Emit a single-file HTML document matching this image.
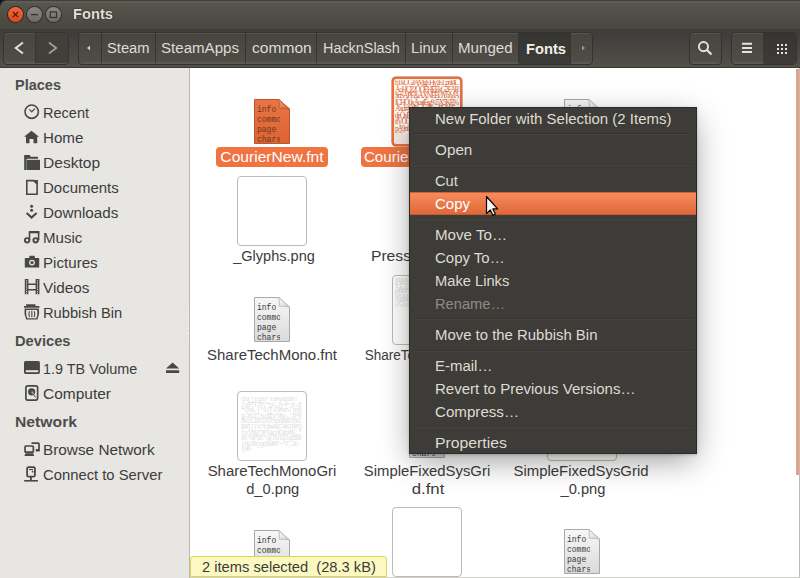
<!DOCTYPE html>
<html><head><meta charset="utf-8">
<style>
*{margin:0;padding:0;box-sizing:border-box}
html,body{width:800px;height:578px;overflow:hidden;background:#fff}
body{position:relative;font-family:"Liberation Sans",sans-serif;font-size:14.7px}
.a{position:absolute}
.t{position:absolute;white-space:pre;line-height:17px}
#title{left:0;top:0;width:800px;height:29px;background:linear-gradient(#403f3a 0,#403f3a 1px,#5e5c54 1px,#5e5c54 3px,#57554e 3px,#47463f 29px)}
#tool{left:0;top:29px;width:800px;height:39px;background:linear-gradient(#3d3c38 0,#4c4a45 28px,#54514b 38px)}
.wb{position:absolute;top:7px;width:15px;height:15px;border-radius:50%}
#side{left:0;top:68px;width:190px;height:510px;background:#e8e6e3;border-right:1px solid #b9b7b1}
#content{left:190px;top:68px;width:610px;height:510px;background:#fff}
.sh{font-weight:bold;color:#4d4d4d}
.si{color:#3c3c3c}
.ic{position:absolute}
.lbl{color:#3c3c3c}

.fnt{position:absolute;width:36px;height:45px}
.fnt .pg{position:absolute;left:0;top:0;width:36px;height:45px;border:1px solid #a3a3a3;background:linear-gradient(#f5f5f5,#dedede);clip-path:polygon(0 0,24px 0,36px 11px,36px 45px,0 45px)}
.fnt .fold{position:absolute;left:24px;top:0;width:12px;height:11px;background:linear-gradient(225deg,transparent 50%,#d8d8d8 50%,#f4f4f4);}
.fnt .ft{position:absolute;left:3px;top:6px;width:26px;height:39px;overflow:hidden;font-family:"Liberation Mono",monospace;font-size:9px;line-height:10px;transform:scaleX(0.89);transform-origin:left;color:#3a3a3a;white-space:pre}
.fnt .fe{position:absolute;left:0;top:0}
.th{position:absolute;width:70px;height:70px;border:1px solid #bebbb5;border-radius:4px;background:#fff;overflow:hidden}
.lb{position:absolute;white-space:pre;line-height:17px;color:#3c3c3c;text-align:center;width:150px}

#menu{position:absolute;left:409px;top:107px;width:288px;height:347px;background:#3d3c38;border:1px solid #2b2a27;box-shadow:0 9px 30px -3px rgba(0,0,0,.4),0 1px 3px rgba(0,0,0,.2)}
.mi{position:absolute;left:25px;transform-origin:left;white-space:pre;line-height:17px;color:#dfdbd2}
.ms{position:absolute;left:4px;width:278px;height:2px;border-top:1px solid #363531;border-bottom:1px solid #45443f}
</style></head><body>
<div id="title" class="a"></div>
<div class="a" style="left:0;top:0;width:6px;height:6px;background:radial-gradient(circle at 6px 6px,transparent 4.5px,#46453f 5px,#0c1620 6.5px)"></div>
<div class="wb" style="left:8px;background:linear-gradient(#f0683a,#dc4a1c);box-shadow:0 0 0 1px #2e2520"></div>
<div class="wb" style="left:27px;background:linear-gradient(#8b8983,#6c6a64);box-shadow:0 0 0 1px #2f2e2a"></div>
<div class="wb" style="left:46px;background:linear-gradient(#8b8983,#6c6a64);box-shadow:0 0 0 1px #2f2e2a"></div>
<svg class="a" style="left:0;top:0" width="70" height="29">
<path d="M12.8 11.8L18.2 17.2M18.2 11.8L12.8 17.2" stroke="#3a1a10" stroke-width="1.2"/>
<path d="M31 14.6H38" stroke="#34332f" stroke-width="1.3"/>
<rect x="50.3" y="11.9" width="6.2" height="5.6" fill="none" stroke="#34332f" stroke-width="1.2"/>
</svg>
<div class="t" style="left:73px;top:6px;font-weight:bold;color:#e4e0d7;text-shadow:0 0 1px #1d1c1a,0 0 1px #1d1c1a">Fonts</div>

<div id="tool" class="a"></div>
<div class="a" style="left:0;top:67px;width:800px;height:1px;background:#3a3935"></div>
<!-- nav -->
<div class="a" style="left:3px;top:32px;width:66px;height:33px;border:1px solid #34332f;border-radius:4px;background:linear-gradient(#55534c 0,#55534c 1px,#47453f 1px,#4f4d47 29px,#5a5851 29px,#5a5851 31px)"></div>
<div class="a" style="left:35px;top:33px;width:1px;height:30px;background:#35342f"></div>
<div class="a" style="left:36px;top:33px;width:32px;height:30px;background:#403f3a;border-radius:0 3px 3px 0"></div>
<svg class="a" style="left:0;top:29px" width="70" height="39"><path d="M23 13.5L15.8 19L23 24.5" stroke="#e4e0d7" stroke-width="2" fill="none"/><path d="M49 13.5L56.2 19L49 24.5" stroke="#a29e96" stroke-width="1.8" fill="none"/></svg>
<!-- path bar -->
<div class="a" style="left:78px;top:32px;width:515px;height:33px;border:1px solid #34332f;border-radius:4px;background:linear-gradient(#55534c 0,#55534c 1px,#47453f 1px,#4f4d47 29px,#5a5851 29px,#5a5851 31px)"></div>
<div class="a" style="left:519px;top:33px;width:51px;height:31px;background:linear-gradient(#363531,#3c3b37)"></div>
<div class="a" style="left:101px;top:33px;width:1px;height:30px;background:#35342f"></div>
<div class="a" style="left:155px;top:33px;width:1px;height:30px;background:#35342f"></div>
<div class="a" style="left:245px;top:33px;width:1px;height:30px;background:#35342f"></div>
<div class="a" style="left:316px;top:33px;width:1px;height:30px;background:#35342f"></div>
<div class="a" style="left:405px;top:33px;width:1px;height:30px;background:#35342f"></div>
<div class="a" style="left:452px;top:33px;width:1px;height:30px;background:#35342f"></div>
<div class="a" style="left:518px;top:33px;width:1px;height:30px;background:#35342f"></div>
<div class="a" style="left:570px;top:33px;width:1px;height:31px;background:#35342f"></div>
<svg class="a" style="left:85px;top:44px" width="8" height="8"><path d="M5 1.5L2 4L5 6.5Z" fill="#cfcbc2"/></svg>
<svg class="a" style="left:579px;top:44px" width="8" height="8"><path d="M3 1.5L6 4L3 6.5Z" fill="#9a968e"/></svg>
<div class="t" style="left:107px;top:40px;color:#dfdbd2">Steam</div>
<div class="t" style="left:161px;top:40px;color:#dfdbd2;transform:scaleX(1.027);transform-origin:left">SteamApps</div>
<div class="t" style="left:252px;top:40px;color:#dfdbd2;transform:scaleX(1.06);transform-origin:left">common</div>
<div class="t" style="left:323px;top:40px;color:#dfdbd2;transform:scaleX(0.98);transform-origin:left">HacknSlash</div>
<div class="t" style="left:410.5px;top:40px;color:#dfdbd2;transform:scaleX(1.01);transform-origin:left">Linux</div>
<div class="t" style="left:458px;top:40px;color:#dfdbd2;transform:scaleX(1.03);transform-origin:left">Munged</div>
<div class="t" style="left:526px;top:40.5px;color:#f2efe8;font-weight:bold;transform:scaleX(1.0);transform-origin:left">Fonts</div>
<!-- search -->
<div class="a" style="left:689px;top:32px;width:33px;height:33px;border:1px solid #34332f;border-radius:4px;background:linear-gradient(#55534c 0,#55534c 1px,#47453f 1px,#4f4d47 29px,#5a5851 29px,#5a5851 31px)"></div>
<svg class="a" style="left:689px;top:32px" width="33" height="32"><circle cx="14.5" cy="14.6" r="4.6" stroke="#e6e2d9" stroke-width="1.9" fill="none"/><path d="M18 18L22.5 22.5" stroke="#e6e2d9" stroke-width="2.2"/></svg>
<!-- view -->
<div class="a" style="left:731px;top:32px;width:66px;height:33px;border:1px solid #34332f;border-radius:4px;background:linear-gradient(#55534c 0,#55534c 1px,#47453f 1px,#4f4d47 29px,#5a5851 29px,#5a5851 31px)"></div>
<div class="a" style="left:763px;top:33px;width:33px;height:31px;background:linear-gradient(#363531,#3c3b37);border-radius:0 3px 3px 0"></div>
<svg class="a" style="left:731px;top:32px" width="66" height="32">
<path d="M11 11.8H21M11 15.9H21M11 20H21" stroke="#e6e2d9" stroke-width="2"/>
<g fill="#e6e2d9"><rect x="46" y="12" width="2" height="2"/><rect x="50" y="12" width="2" height="2"/><rect x="54" y="12" width="2" height="2"/><rect x="46" y="16" width="2" height="2"/><rect x="50" y="16" width="2" height="2"/><rect x="54" y="16" width="2" height="2"/><rect x="46" y="20" width="2" height="2"/><rect x="50" y="20" width="2" height="2"/><rect x="54" y="20" width="2" height="2"/></g>
</svg>

<!-- sidebar -->
<div id="side" class="a"></div>
<div class="t sh" style="left:15px;top:77px;transform:scaleX(0.987);transform-origin:left">Places</div>
<div class="t si" style="left:43px;top:105px;transform:scaleX(0.99);transform-origin:left">Recent</div>
<div class="t si" style="left:43px;top:130px;transform:scaleX(1.03);transform-origin:left">Home</div>
<div class="t si" style="left:43px;top:155px;transform:scaleX(1.06);transform-origin:left">Desktop</div>
<div class="t si" style="left:43px;top:180px;transform:scaleX(1.02);transform-origin:left">Documents</div>
<div class="t si" style="left:43px;top:205px;transform:scaleX(1.037);transform-origin:left">Downloads</div>
<div class="t si" style="left:43px;top:230px;transform:scaleX(1.027);transform-origin:left">Music</div>
<div class="t si" style="left:43px;top:255px;transform:scaleX(1.03);transform-origin:left">Pictures</div>
<div class="t si" style="left:43px;top:280px;transform:scaleX(1.04);transform-origin:left">Videos</div>
<div class="t si" style="left:43px;top:305px;transform:scaleX(1.0);transform-origin:left">Rubbish Bin</div>
<div class="t sh" style="left:15px;top:333px">Devices</div>
<div class="t si" style="left:43px;top:361px;transform:scaleX(0.98);transform-origin:left">1.9 TB Volume</div>
<div class="t si" style="left:43px;top:386px;transform:scaleX(1.055);transform-origin:left">Computer</div>
<div class="t sh" style="left:15px;top:414px;transform:scaleX(1.07);transform-origin:left">Network</div>
<div class="t si" style="left:43px;top:442px;transform:scaleX(1.044);transform-origin:left">Browse Network</div>
<div class="t si" style="left:43px;top:467px;transform:scaleX(1.008);transform-origin:left">Connect to Server</div>


<svg class="a" style="left:0;top:0" width="190" height="578">
<g fill="none" stroke="#474747" stroke-width="1.6">
<circle cx="31.7" cy="111.7" r="6.7"/>
<path d="M29.4 109.4L31.7 111.8L35 108.6" stroke-width="1.2"/>
<path d="M26.8 180.6H33.8L37.1 183.9V194.3H26.8Z"/>
<path d="M26.6 212.9L31.6 217.6L36.6 212.9" stroke-width="2"/>
<circle cx="27.1" cy="240.3" r="2.2" stroke-width="1.9"/>
<circle cx="35.6" cy="240.3" r="2.2" stroke-width="1.9"/>
<path d="M29.5 240.3V232H38.6V240.3" stroke-width="1.6"/>
<rect x="25.9" y="385.8" width="11.7" height="14.3" rx="1.8" stroke-width="1.7"/>
<rect x="25.05" y="446" width="8.3" height="6.2" rx="0.8" stroke-width="1.7"/>
<path d="M31.5 443.1H38.2Q39 443.1 39 443.9V450.2H36.7" stroke-width="1.7"/>
<rect x="27.1" y="467.1" width="7.8" height="9.6" rx="1.5" stroke-width="1.8"/>
<path d="M30.9 477V480.3" stroke-width="1.8"/>
<path d="M24.2 480.8H37.9" stroke-width="1.6"/>
<path d="M29 469.5H33" stroke-width="1.1"/>
</g>
<g fill="#474747">
<path d="M33.6 179.9H37.9V184.6Z"/>
<path d="M31.5 130.8L24 136.7H26V143.2H29.5V139H33.5V143.2H37.2V136.7H39Z"/>
<path d="M24.2 155H29.8L30.6 156.8H38V158.8H26.6V170H24.2Z"/>
<path d="M26.8 159.8H40V170H26.8Z"/>
<circle cx="31.6" cy="206.3" r="1.5"/><circle cx="31.6" cy="210.3" r="1.5"/>
<path d="M29.3 231H39.3V233.3H29.3Z"/>
<path d="M24.8 258.1H29.1L29.6 255.8H34.5L35 258.1H39.2V267.6H24.8Z"/>
<path d="M24.8 279H28.4V294.3H24.8ZM35.6 279H39.4V294.3H35.6ZM28.4 283.6H35.6V285.1H28.4ZM28.4 289H35.6V290.5H28.4Z"/>
<path d="M26.1 304.2H35.5V306.2H26.1ZM24 306H39.4V307.8H24Z"/>
<path d="M24.6 308.6H39Q40 314 37.4 319.6H26.2Q23.6 314 24.6 308.6Z"/>
<path d="M25.6 361H38.3Q39.9 361 39.9 362.6V372.3Q39.9 373.9 38.3 373.9H25.6Q24 373.9 24 372.3V362.6Q24 361 25.6 361Z"/>
<path d="M166 370.2H179.2V373H166ZM172.6 362.5L179.2 368.6H166Z"/>
<circle cx="31.6" cy="391.8" r="3.6"/>
<path d="M24.4 456H34.2L33.2 453.3H25.4Z"/>
<path d="M35.8 449H38.8L39.6 451.5H35.8Z"/>
</g>
<g fill="#e8e6e3">
<circle cx="32" cy="262.6" r="2.9"/>
<rect x="25.8" y="370.2" width="12.4" height="2"/>
<path d="M26.3 309.9H37.2Q38 314 36.4 318.2H27.2Q25.6 314 26.3 309.9Z"/>
<circle cx="26.6" cy="280.8" r=".6"/><circle cx="26.6" cy="282.9" r=".6"/><circle cx="26.6" cy="285" r=".6"/><circle cx="26.6" cy="287.1" r=".6"/><circle cx="26.6" cy="289.2" r=".6"/><circle cx="26.6" cy="291.3" r=".6"/><circle cx="26.6" cy="293.2" r=".6"/>
<circle cx="37.5" cy="280.8" r=".6"/><circle cx="37.5" cy="282.9" r=".6"/><circle cx="37.5" cy="285" r=".6"/><circle cx="37.5" cy="287.1" r=".6"/><circle cx="37.5" cy="289.2" r=".6"/><circle cx="37.5" cy="291.3" r=".6"/><circle cx="37.5" cy="293.2" r=".6"/>
</g>
<circle cx="27.1" cy="240.3" r="1" fill="#e8e6e3"/>
<circle cx="32" cy="262.6" r="1.6" fill="#474747"/>
<path d="M29.5 311.2Q28.3 314 29.5 317M34.2 311.2Q35.4 314 34.2 317M31.85 310.8V317.2" stroke="#474747" stroke-width="1.1" fill="none"/>
<path d="M31.8 391.6L35.4 397.2" stroke="#e8e6e3" stroke-width="1.3"/>
<path d="M32.3 392.6L35.5 397.4" stroke="#474747" stroke-width="1"/>
<circle cx="32.6" cy="471.7" r=".9" fill="#474747"/>
</svg>

<div class="a" style="left:188px;top:308px;width:1px;height:1px;background:#fff"></div><div class="a" style="left:188px;top:313px;width:1px;height:1px;background:#fff"></div><div class="a" style="left:188px;top:318px;width:1px;height:1px;background:#fff"></div><div class="a" style="left:188px;top:323px;width:1px;height:1px;background:#fff"></div><div class="a" style="left:188px;top:328px;width:1px;height:1px;background:#fff"></div><div class="a" style="left:188px;top:333px;width:1px;height:1px;background:#fff"></div><div class="a" style="left:188px;top:338px;width:1px;height:1px;background:#fff"></div>
<!-- content -->
<div id="content" class="a"></div>
<div class="fnt" style="left:254px;top:99px"><svg class="fe" width="36" height="46"><defs><linearGradient id="fg1" x1="0" y1="0" x2="0" y2="1"><stop offset="0" stop-color="#ea7444"/><stop offset="1" stop-color="#dc6431"/></linearGradient><linearGradient id="fg1f" x1="0" y1="0" x2="1" y2="1"><stop offset="0" stop-color="#f4a27c"/><stop offset="1" stop-color="#d2663a"/></linearGradient></defs><path d="M0.5 0.5H24.8L35.5 10V44.5H0.5Z" fill="url(#fg1)" stroke="#b8562c"/><path d="M24.8 0.5Q25.6 5 25.3 9.3Q30 8.8 35.5 10Z" fill="url(#fg1f)" stroke="#b8562c" stroke-width="0.8" stroke-linejoin="round"/></svg><div class="ft" style="color:#6a3722">info
commo
page
chars</div></div>
<div class="a" style="left:216px;top:147px;width:112px;height:20px;border-radius:4px;background:#ef7442"></div>
<div class="lb" style="left:197px;top:149px;color:#fff;transform:scaleX(1.063);transform-origin:center">CourierNew.fnt</div>
<div class="a" style="left:392px;top:77px;width:70px;height:69px;border:2px solid #e9713f;border-radius:4px;background:#fbeee8;overflow:hidden;box-shadow:0 0 0 0.5px #b65a32"><div style="position:absolute;left:1px;top:1px;width:64px;height:53px;background:#fff;font-family:'Liberation Serif',serif;font-size:7.5px;line-height:6.5px;letter-spacing:-1.2px;color:#e0622e;word-break:break-all;overflow:hidden">bTkÚGJÂMgÉHy1ELpnI4LÄoHÇP2ÖÖÉHÈÉkG2FÅR$nSÃPÈ&ÅXNÉÈØYhMÄIÇHÕ0xÂoatÉsg%5X5KÈ%Áxdr#ÓJPznVdTwnFÜJÅÈadeÒxÉsIL8uÜIH&ÙÈr#jÜeCtfVÔOxH1#Q5kkxKVrlÄ9RpÄ9nfi3TKWT3Û3BwÑX7#ASnÂhÔÇaQzÕÚGsÅkklkNvØlHYI0qUOdÒGNAÇTÂMgÔDJ0ÔiTØ6eÓguPOwtvv&KSNd7vUÀC0ÁgSÃDÁ%ÙL7ÀgVf2ÂÃycØ2ÔY4l3ZÀxfDD9u7YÓeregK2N3uZd0vÕÔAvÚeÙKÛPjZvWpØcLktlKUVQDTÑtÚSÔÒuÛeTÄÄQCBÚNÁRpY1D61$y4Ñb7ÃnQHfsÛÉÀnyQÂTÁzCqXÓATWSuÕPÅHbÀÁÅvNÅH5Y9FMyrÅDIqbÔyÓzZ9rzÂvy5À7ÅZrRnPkqaJÜ4oJ1Ü%PTÙÛgS6Rt2MkwUÜ2UpzldnZfaLgCdÄsqCjcÀÕ$zIO3NK78FX8Qo7lTÂzÈxbL9HXoJ8CØL7KÓ2I7PsBdÄn8Õ</div></div>
<div class="a" style="left:361px;top:147px;width:132px;height:20px;border-radius:4px;background:#ef7442"></div>
<div class="lb" style="left:352px;top:149px;color:#fff;transform:scaleX(1.03);transform-origin:center">CourierNew_0.png</div>
<div class="fnt" style="left:564px;top:99px"><svg class="fe" width="36" height="46"><defs><linearGradient id="fg2" x1="0" y1="0" x2="0" y2="1"><stop offset="0" stop-color="#f7f7f7"/><stop offset="1" stop-color="#dadada"/></linearGradient><linearGradient id="fg2f" x1="0" y1="0" x2="1" y2="1"><stop offset="0" stop-color="#ffffff"/><stop offset="1" stop-color="#cfcfcf"/></linearGradient></defs><path d="M0.5 0.5H24.8L35.5 10V44.5H0.5Z" fill="url(#fg2)" stroke="#a8a8a8"/><path d="M24.8 0.5Q25.6 5 25.3 9.3Q30 8.8 35.5 10Z" fill="url(#fg2f)" stroke="#b4b4b4" stroke-width="0.8" stroke-linejoin="round"/></svg><div class="ft" style="color:#3a3a3a">info
commo
page
chars</div></div>
<div class="th" style="left:237px;top:176px"></div>
<div class="lb" style="left:198.6px;top:248px;transform:scaleX(0.99);transform-origin:center">_Glyphs.png</div>
<div class="lb" style="left:352px;top:248px;transform:scaleX(1.067);transform-origin:center">PressStart2P.fnt</div>
<div class="fnt" style="left:254px;top:297px"><svg class="fe" width="36" height="46"><defs><linearGradient id="fg3" x1="0" y1="0" x2="0" y2="1"><stop offset="0" stop-color="#f7f7f7"/><stop offset="1" stop-color="#dadada"/></linearGradient><linearGradient id="fg3f" x1="0" y1="0" x2="1" y2="1"><stop offset="0" stop-color="#ffffff"/><stop offset="1" stop-color="#cfcfcf"/></linearGradient></defs><path d="M0.5 0.5H24.8L35.5 10V44.5H0.5Z" fill="url(#fg3)" stroke="#a8a8a8"/><path d="M24.8 0.5Q25.6 5 25.3 9.3Q30 8.8 35.5 10Z" fill="url(#fg3f)" stroke="#b4b4b4" stroke-width="0.8" stroke-linejoin="round"/></svg><div class="ft" style="color:#3a3a3a">info
commo
page
chars</div></div>
<div class="lb" style="left:197px;top:347px;transform:scaleX(1.02);transform-origin:center">ShareTechMono.fnt</div>
<div class="th" style="left:392px;top:275px"><div style="position:absolute;left:2px;top:2px;width:64px;height:23px;font-family:'Liberation Mono',monospace;font-weight:bold;font-size:7px;line-height:5.6px;letter-spacing:-1px;color:#e6e6e6;word-break:break-all;overflow:hidden">pQQs]2oam3S9t5I?rA:6tj;{Saq,W(//%eB@~TBWpbGf8*2?akwrr+E=&lt;#*DV[A)&amp;8FQgm2-P3[Lx|fn3o%#_O}I%#</div><div style="position:absolute;left:2px;top:25px;width:64px;height:7px;font-family:'Liberation Mono',monospace;font-size:5px;line-height:3.5px;letter-spacing:-0.5px;color:#e8e8e8;word-break:break-all;overflow:hidden">pu+a*IJ3++[iQ&amp;~2MO,{_+W$cm"sxRRn"q+,-u0B</div></div>
<div class="lb" style="left:352px;top:347px;transform:scaleX(0.92);transform-origin:center">ShareTechMono_0.p</div>
<div class="th" style="left:237px;top:391px"><div style="position:absolute;left:3px;top:5px;width:62px;height:58px;font-family:'Liberation Mono',monospace;font-size:6.5px;line-height:5.6px;letter-spacing:-0.75px;color:#e0e0e0;word-break:break-all;overflow:hidden">cG{j|Q5U"TdHyasBn!{v5^T7P?*p=,h~P~X.#*{hA.[^1{[4lMvn7)n8g-XtZ|scdtVl$y-;{FRSV}L1ECOSThpg9$U]%i$A}[(V?t0mA9,H%]HfQtx)haT?PIacdC8bmS:;At!GP9C"g(Dv1Slg6$N|Hx2BjgdewRF~^7_Ju(HO</div></div>
<div class="lb" style="left:197px;top:463px;transform:scaleX(1.017);transform-origin:center">ShareTechMonoGri</div>
<div class="lb" style="left:197.7px;top:481px;transform:scaleX(1.0);transform-origin:center">d_0.png</div>
<div class="fnt" style="left:409px;top:413px"><svg class="fe" width="36" height="46"><defs><linearGradient id="fg4" x1="0" y1="0" x2="0" y2="1"><stop offset="0" stop-color="#f7f7f7"/><stop offset="1" stop-color="#dadada"/></linearGradient><linearGradient id="fg4f" x1="0" y1="0" x2="1" y2="1"><stop offset="0" stop-color="#ffffff"/><stop offset="1" stop-color="#cfcfcf"/></linearGradient></defs><path d="M0.5 0.5H24.8L35.5 10V44.5H0.5Z" fill="url(#fg4)" stroke="#a8a8a8"/><path d="M24.8 0.5Q25.6 5 25.3 9.3Q30 8.8 35.5 10Z" fill="url(#fg4f)" stroke="#b4b4b4" stroke-width="0.8" stroke-linejoin="round"/></svg><div class="ft" style="color:#3a3a3a">info
commo
page
chars</div></div>
<div class="lb" style="left:352px;top:463px;transform:scaleX(1.012);transform-origin:center">SimpleFixedSysGri</div>
<div class="lb" style="left:352.5px;top:481px;transform:scaleX(1.14);transform-origin:center">d.fnt</div>
<div class="th" style="left:547px;top:391px"></div>
<div class="lb" style="left:506px;top:463px;transform:scaleX(1.015);transform-origin:center">SimpleFixedSysGrid</div>
<div class="lb" style="left:508px;top:481px;transform:scaleX(1.0);transform-origin:center">_0.png</div>
<div class="fnt" style="left:254px;top:530px"><svg class="fe" width="36" height="46"><defs><linearGradient id="fg5" x1="0" y1="0" x2="0" y2="1"><stop offset="0" stop-color="#f7f7f7"/><stop offset="1" stop-color="#dadada"/></linearGradient><linearGradient id="fg5f" x1="0" y1="0" x2="1" y2="1"><stop offset="0" stop-color="#ffffff"/><stop offset="1" stop-color="#cfcfcf"/></linearGradient></defs><path d="M0.5 0.5H24.8L35.5 10V44.5H0.5Z" fill="url(#fg5)" stroke="#a8a8a8"/><path d="M24.8 0.5Q25.6 5 25.3 9.3Q30 8.8 35.5 10Z" fill="url(#fg5f)" stroke="#b4b4b4" stroke-width="0.8" stroke-linejoin="round"/></svg><div class="ft" style="color:#3a3a3a">info
commo
page
chars</div></div>
<div class="th" style="left:392px;top:507px"></div>
<div class="fnt" style="left:564px;top:529px"><svg class="fe" width="36" height="46"><defs><linearGradient id="fg6" x1="0" y1="0" x2="0" y2="1"><stop offset="0" stop-color="#f7f7f7"/><stop offset="1" stop-color="#dadada"/></linearGradient><linearGradient id="fg6f" x1="0" y1="0" x2="1" y2="1"><stop offset="0" stop-color="#ffffff"/><stop offset="1" stop-color="#cfcfcf"/></linearGradient></defs><path d="M0.5 0.5H24.8L35.5 10V44.5H0.5Z" fill="url(#fg6)" stroke="#a8a8a8"/><path d="M24.8 0.5Q25.6 5 25.3 9.3Q30 8.8 35.5 10Z" fill="url(#fg6f)" stroke="#b4b4b4" stroke-width="0.8" stroke-linejoin="round"/></svg><div class="ft" style="color:#3a3a3a">info
commo
page
chars</div></div>
<div class="a" style="left:796px;top:69px;width:3px;height:406px;background:#e4a285"></div>
<div class="a" style="left:799px;top:68px;width:1px;height:510px;background:#bdbbb7"></div>
<div class="a" style="left:190px;top:577px;width:610px;height:1px;background:#d3d1cc"></div>
<div class="a" style="left:190px;top:556px;width:197px;height:21px;background:#fbf9c1;border:1px solid #d8d45c;border-radius:3px 3px 0 0"></div>
<div class="t" style="left:202px;top:559px;color:#3c3c3c">2 items selected  (28.3 kB)</div>
<div id="menu">
<div class="a" style="left:0;top:84px;width:286px;height:23px;background:linear-gradient(#f68b5b,#e0683a);border-top:1px solid #cf6034;border-bottom:1px solid #c75a2f"></div>
<div class="mi" style="top:3px;color:#dfdbd2;transform:scaleX(1.02)">New Folder with Selection (2 Items)</div>
<div class="mi" style="top:34px;color:#dfdbd2;transform:scaleX(1.04)">Open</div>
<div class="mi" style="top:65px;color:#dfdbd2">Cut</div>
<div class="mi" style="top:88px;color:#fff;transform:scaleX(1.02)">Copy</div>
<div class="mi" style="top:119px;color:#dfdbd2;transform:scaleX(1.03)">Move To…</div>
<div class="mi" style="top:142px;color:#dfdbd2;transform:scaleX(1.02)">Copy To…</div>
<div class="mi" style="top:165px;color:#dfdbd2">Make Links</div>
<div class="mi" style="top:188px;color:#8f8b83">Rename…</div>
<div class="mi" style="top:219px;color:#dfdbd2;transform:scaleX(1.015)">Move to the Rubbish Bin</div>
<div class="mi" style="top:250px;color:#dfdbd2;transform:scaleX(1.02)">E-mail…</div>
<div class="mi" style="top:273px;color:#dfdbd2;transform:scaleX(1.023)">Revert to Previous Versions…</div>
<div class="mi" style="top:296px;color:#dfdbd2;transform:scaleX(1.03)">Compress…</div>
<div class="mi" style="top:327px;color:#dfdbd2;transform:scaleX(1.074)">Properties</div>
<div class="ms" style="top:25px"></div>
<div class="ms" style="top:56px"></div>
<div class="ms" style="top:110px"></div>
<div class="ms" style="top:210px"></div>
<div class="ms" style="top:242px"></div>
<div class="ms" style="top:318px"></div>
</div>
<svg class="a" style="left:480px;top:190px" width="24" height="30"><path d="M6.5 6.5V23.6L10.3 20L12.9 25.2L15.3 24.1L12.9 18.9H17.6Z" fill="#f4f4f4" stroke="#000" stroke-width="1.2" stroke-linejoin="round"/></svg>
</body></html>
